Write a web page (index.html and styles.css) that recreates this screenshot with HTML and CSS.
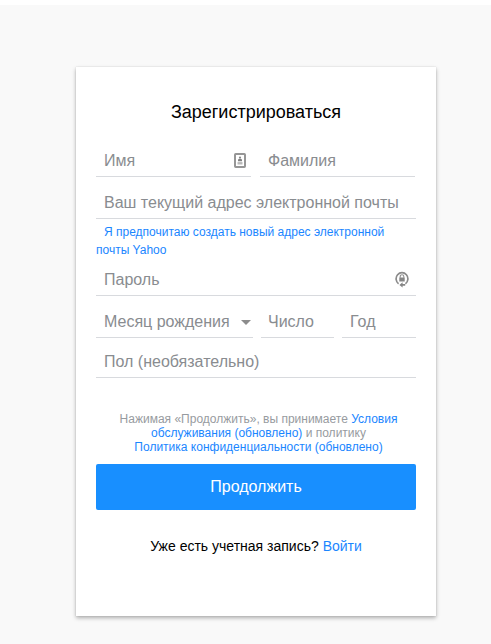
FILE: index.html
```html
<!DOCTYPE html>
<html lang="ru">
<head>
<meta charset="utf-8">
<title>Зарегистрироваться</title>
<link rel="stylesheet" href="styles.css">
</head>
<body>
<main class="card">
  <h1 class="title">Зарегистрироваться</h1>
  <form class="form">
    <div class="row row-name">
      <div class="field"><span>Имя</span>
        <svg class="icon-card" width="12" height="15" viewBox="0 0 12 15"><rect x="1" y="1" width="10" height="13" rx=".7" fill="#fff" stroke="#969696" stroke-width="2"/><circle cx="6" cy="4.6" r="1.1" fill="#888"/><path d="M4 8.2V7q0-1.3 2-1.3T8 7v1.2z" fill="#808080"/><path d="M3.5 10.3h5" stroke="#b8b8b8" stroke-width="2.4"/></svg>
      </div>
      <div class="field"><span>Фамилия</span></div>
    </div>
    <div class="field field-email"><span>Ваш текущий адрес электронной почты</span></div>
    <p class="hint"><a>Я предпочитаю создать новый адрес электронной<br>почты Yahoo</a></p>
    <div class="field field-password"><span>Пароль</span>
      <svg class="icon-lock" width="14" height="17" viewBox="0 0 14 17"><path d="M3.6 12.8A5.9 6.1 0 1 1 10.4 12.8" fill="none" stroke="#8b8b8b" stroke-width="1.7"/><path d="M5.2 6.8V5.5a1.8 1.8 0 0 1 3.6 0v1.3" fill="none" stroke="#909090" stroke-width="1.1"/><rect x="4.3" y="6.5" width="5.4" height="4" fill="#858585"/><path d="M7.6 11.3v1.6h2.6v1.9H7.6v1.8L4.4 13.9z" fill="#858585"/></svg>
    </div>
    <div class="row row-birth">
      <div class="field"><span>Месяц рождения</span><i class="caret"></i></div>
      <div class="field field-day"><span>Число</span></div>
      <div class="field"><span>Год</span></div>
    </div>
    <div class="field field-gender"><span>Пол (необязательно)</span></div>
    <p class="terms">Нажимая «Продолжить», вы принимаете <a>Условия</a><br><a>обслуживания (обновлено)</a> и политику<br><a>Политика конфиденциальности (обновлено)</a></p>
    <button class="submit" type="button"><span>Продолжить</span></button>
  </form>
  <p class="signin">Уже есть учетная запись? <a>Войти</a></p>
</main>
</body>
</html>
```
FILE: styles.css
```css
* { box-sizing: border-box; }
body {
  margin: 0;
  padding: 62px 0 28px 76px;
  border-top: 5px solid #fff;
  height: 644px;
  overflow: hidden;
  background: #f9f9f9;
  font-family: "Liberation Sans", Arial, sans-serif;
}
p, h1 { margin: 0; }
a { color: #1a86ff; }
.card {
  width: 360px;
  height: 549px;
  padding: 32px 20px 0;
  background: #fff;
  box-shadow: 0 2px 4px rgba(0, 0, 0, .3), 0 0 1px rgba(0, 0, 0, .16);
}
.title {
  height: 46px;
  font-size: 18px;
  line-height: 26px;
  font-weight: 400;
  text-align: center;
  color: #000;
}
.row { display: grid; }
.row-name { grid-template-columns: 155px 155px; column-gap: 9px; }
.row-birth { grid-template-columns: 157px 73px 74px; column-gap: 8px; margin-top: 10px; }
.field {
  display: flex;
  align-items: center;
  justify-content: space-between;
  height: 32px;
  padding: 0 8px;
  border-bottom: 1px solid #d8dade;
  font-size: 16px;
  line-height: 18px;
  color: #898c90;
  white-space: nowrap;
}
.field-day { padding-left: 7px; }
.icon-card { margin-right: -3px; }
.icon-lock { margin-right: -1px; }
.field-email { margin-top: 10px; }
.hint {
  height: 45px;
  padding-top: 4px;
  font-size: 12px;
  line-height: 18px;
  text-indent: 8px;
  white-space: nowrap;
}
.caret {
  border: 5.5px solid transparent;
  border-top-color: #8c8c8c;
  border-bottom: 0;
  margin: 2px -6px 0 0;
}
.field-gender { margin-top: 8px; }
.terms {
  margin-top: 34px;
  padding-left: 5px;
  font-size: 12px;
  line-height: 14px;
  text-align: center;
  white-space: nowrap;
  color: #979ba0;
}
.submit {
  display: block;
  width: 320px;
  height: 46px;
  margin-top: 10px;
  padding: 0;
  border: 0;
  border-radius: 2px;
  background: #188fff;
  color: #fff;
  font: 16px "Liberation Sans", Arial, sans-serif;
}
.signin {
  margin-top: 27px;
  font-size: 14px;
  line-height: 18px;
  text-align: center;
  color: #000;
}
```
